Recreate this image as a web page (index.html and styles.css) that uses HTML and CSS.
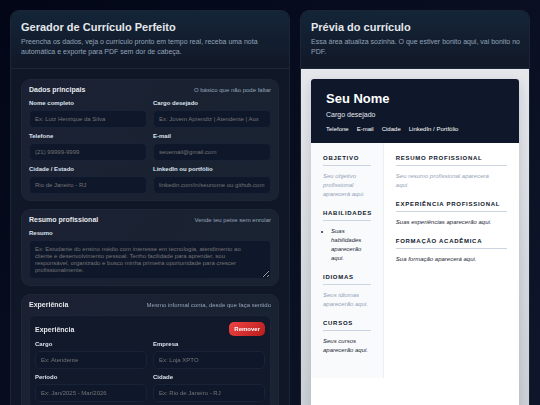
FILE: index.html
```
<!DOCTYPE html>
<html lang="pt-BR">
<head>
    <meta charset="utf-8">
    <meta name="viewport" content="width=device-width, initial-scale=1">
    <title>Gerador de Currículo Perfeito</title>
    <link rel="stylesheet" href="styles.css">
</head>
<body>
    <div class="app">
        <main class="panel">
            <header class="panel-header">
                <h1>Gerador de Currículo Perfeito</h1>
                <p>Preencha os dados, veja o currículo pronto em tempo real, receba uma nota automática e exporte para PDF sem dor de cabeça.</p>
            </header>
            <form class="form">
                <section class="card">
                    <div class="card-title">
                        <h2>Dados principais</h2>
                        <span>O básico que não pode faltar</span>
                    </div>
                    <div class="grid">
                        <div class="field">
                            <label for="nome">Nome completo</label>
                            <input type="text" id="nome" placeholder="Ex: Luiz Henrique da Silva">
                        </div>
                        <div class="field">
                            <label for="cargo">Cargo desejado</label>
                            <input type="text" id="cargo" placeholder="Ex: Jovem Aprendiz | Atendente | Aux">
                        </div>
                        <div class="field">
                            <label for="telefone">Telefone</label>
                            <input type="tel" id="telefone" placeholder="(21) 99999-9999">
                        </div>
                        <div class="field">
                            <label for="email">E-mail</label>
                            <input type="email" id="email" placeholder="seuemail@gmail.com">
                        </div>
                        <div class="field">
                            <label for="cidade">Cidade / Estado</label>
                            <input type="text" id="cidade" placeholder="Rio de Janeiro - RJ">
                        </div>
                        <div class="field">
                            <label for="link">LinkedIn ou portfólio</label>
                            <input type="text" id="link" placeholder="linkedin.com/in/seunome ou github.com">
                        </div>
                    </div>
                </section>

                <section class="card">
                    <div class="card-title">
                        <h2>Resumo profissional</h2>
                        <span>Vende teu peixe sem enrolar</span>
                    </div>
                    <div class="field">
                        <label for="resumo">Resumo</label>
                        <textarea id="resumo" placeholder="Ex: Estudante do ensino médio com interesse em tecnologia, atendimento ao cliente e desenvolvimento pessoal. Tenho facilidade para aprender, sou responsável, organizado e busco minha primeira oportunidade para crescer profissionalmente."></textarea>
                    </div>
                </section>

                <section class="card">
                    <div class="card-title">
                        <h2>Experiência</h2>
                        <span>Mesmo informal conta, desde que faça sentido</span>
                    </div>
                    <div class="item">
                        <div class="item-top">
                            <strong>Experiência</strong>
                            <button type="button" class="btn-danger">Remover</button>
                        </div>
                        <div class="grid">
                            <div class="field">
                                <label for="expCargo">Cargo</label>
                                <input type="text" id="expCargo" placeholder="Ex: Atendente">
                            </div>
                            <div class="field">
                                <label for="expEmpresa">Empresa</label>
                                <input type="text" id="expEmpresa" placeholder="Ex: Loja XPTO">
                            </div>
                            <div class="field">
                                <label for="expPeriodo">Período</label>
                                <input type="text" id="expPeriodo" placeholder="Ex: Jan/2025 - Mar/2026">
                            </div>
                            <div class="field">
                                <label for="expCidade">Cidade</label>
                                <input type="text" id="expCidade" placeholder="Ex: Rio de Janeiro - RJ">
                            </div>
                        </div>
                    </div>
                </section>
            </form>
        </main>

        <aside class="panel">
            <header class="panel-header">
                <h1>Prévia do currículo</h1>
                <p>Essa área atualiza sozinha. O que estiver bonito aqui, vai bonito no PDF.</p>
            </header>
            <div class="preview">
                <article class="resume">
                    <div class="resume-header">
                        <h2>Seu Nome</h2>
                        <p>Cargo desejado</p>
                        <div class="contacts">
                            <span>Telefone</span>
                            <span>E-mail</span>
                            <span>Cidade</span>
                            <span>LinkedIn / Portfólio</span>
                        </div>
                    </div>
                    <div class="resume-body">
                        <div class="resume-side">
                            <section class="block">
                                <h3>Objetivo</h3>
                                <p class="empty">Seu objetivo profissional aparecerá aqui.</p>
                            </section>
                            <section class="block">
                                <h3>Habilidades</h3>
                                <ul>
                                    <li>Suas habilidades aparecerão aqui.</li>
                                </ul>
                            </section>
                            <section class="block">
                                <h3>Idiomas</h3>
                                <p class="empty">Seus idiomas aparecerão aqui.</p>
                            </section>
                            <section class="block">
                                <h3>Cursos</h3>
                                <p>Seus cursos aparecerão aqui.</p>
                            </section>
                        </div>
                        <div class="resume-main">
                            <section class="block">
                                <h3>Resumo profissional</h3>
                                <p class="empty">Seu resumo profissional aparecerá aqui.</p>
                            </section>
                            <section class="block">
                                <h3>Experiência profissional</h3>
                                <p>Suas experiências aparecerão aqui.</p>
                            </section>
                            <section class="block">
                                <h3>Formação acadêmica</h3>
                                <p>Sua formação aparecerá aqui.</p>
                            </section>
                        </div>
                    </div>
                </article>
            </div>
        </aside>
    </div>
</body>
</html>
```
FILE: styles.css
```
* {
    box-sizing: border-box;
    margin: 0;
    padding: 0;
}
body {
    font-family: "Liberation Sans", Arial, sans-serif;
    background: linear-gradient(135deg, #020617, #0f172a);
    color: #e5e7eb;
    min-height: 100vh;
}
.app {
    display: grid;
    grid-template-columns: 28fr 23fr;
    gap: 10px;
    padding: 10px;
    min-height: 100vh;
}
.panel {
    display: flex;
    flex-direction: column;
    min-width: 0;
    background: #101726;
    border: 1px solid #1b2535;
    border-radius: 9px;
    overflow: hidden;
}
.panel-header {
    padding: 9px 6px 11px 10px;
    background: linear-gradient(180deg, #142538, #111827);
    border-bottom: 1px solid #1c2838;
}
.panel-header h1 {
    font-size: 11px;
    line-height: 14px;
    margin-bottom: 3px;
}
.panel-header p {
    font-size: 7px;
    line-height: 10px;
    color: #94a3b8;
}

/* Formulário */
.form {
    display: flex;
    flex-direction: column;
    gap: 8px;
    padding: 10px;
}
.card {
    padding: 6px 7px;
    background: linear-gradient(120deg, #1b2133, #192331);
    border: 1px solid #1c2737;
    border-radius: 9px;
}
.card-title {
    display: flex;
    justify-content: space-between;
    align-items: center;
    margin-bottom: 6px;
    line-height: 8px;
}
.card-title h2 {
    font-size: 7px;
}
.card-title span {
    font-size: 6px;
    color: #94a3b8;
}
.grid {
    display: grid;
    grid-template-columns: 1fr 1fr;
    gap: 5px 6px;
}
.field {
    display: flex;
    flex-direction: column;
    gap: 3px;
    min-width: 0;
}
.field label {
    font-size: 6px;
    line-height: 7px;
    font-weight: bold;
    color: #dbe2ec;
}
.field input,
.field textarea {
    width: 100%;
    font-family: inherit;
    font-size: 6px;
    color: #e5e7eb;
    background: #0f172a;
    border: 1px solid #182337;
    border-radius: 5px;
    padding: 5px;
    outline: none;
}
.field input {
    height: 18px;
}
.field textarea {
    display: block;
    height: 39px;
    line-height: 7px;
    padding-right: 12px;
    resize: vertical;
}
.field input::placeholder,
.field textarea::placeholder {
    color: #757575;
}
.item {
    padding: 6px 5px;
    background: #12192a;
    border: 1px solid #1b2738;
    border-radius: 7px;
}
.item-top {
    display: flex;
    justify-content: space-between;
    align-items: center;
    margin-bottom: 5px;
    font-size: 7px;
}
.btn-danger {
    font-family: inherit;
    font-size: 6px;
    font-weight: bold;
    line-height: 14px;
    padding: 0 5px;
    color: #fff;
    background: linear-gradient(135deg, #ef4444, #b91c1c);
    border: none;
    border-radius: 5px;
    cursor: pointer;
}

/* Prévia */
.preview {
    flex: 1;
    display: flex;
    padding: 10px;
    background: linear-gradient(180deg, #e5e7eb, #cbd0d6);
}
.resume {
    flex: 1;
    min-width: 0;
    background: #fff;
    color: #1f2937;
    border-radius: 3px;
    overflow: hidden;
    box-shadow: 0 4px 12px rgba(15, 23, 42, 0.15);
}
.resume-header {
    padding: 12px 15px 9px;
    background: #0f172a;
    color: #fff;
}
.resume-header h2 {
    font-size: 13px;
    line-height: 16px;
    margin-bottom: 4px;
}
.resume-header p {
    font-size: 7px;
    line-height: 8px;
    margin-bottom: 5px;
    color: #e2e8f0;
}
.contacts {
    display: flex;
    flex-wrap: wrap;
    gap: 2px 8px;
    font-size: 6px;
    line-height: 10px;
}
.resume-body {
    display: grid;
    grid-template-columns: 35% 65%;
}
.resume-side {
    padding: 12px;
    background: #f8fafc;
    border-right: 1px solid #eceff3;
}
.resume-main {
    padding: 12px;
}
.block {
    margin-bottom: 11px;
}
.block h3 {
    font-size: 6px;
    line-height: 7px;
    letter-spacing: 0.12em;
    text-transform: uppercase;
    color: #0f172a;
    padding-bottom: 3px;
    margin-bottom: 6px;
    border-bottom: 1px solid #cbd5e1;
}
.block p,
.block li {
    font-size: 6px;
    line-height: 9px;
    font-style: italic;
    color: #1f2937;
}
.resume-main p {
    padding-right: 10px;
}
.block .empty {
    color: #94a3b8;
}
.block ul {
    padding-left: 8px;
}
```
